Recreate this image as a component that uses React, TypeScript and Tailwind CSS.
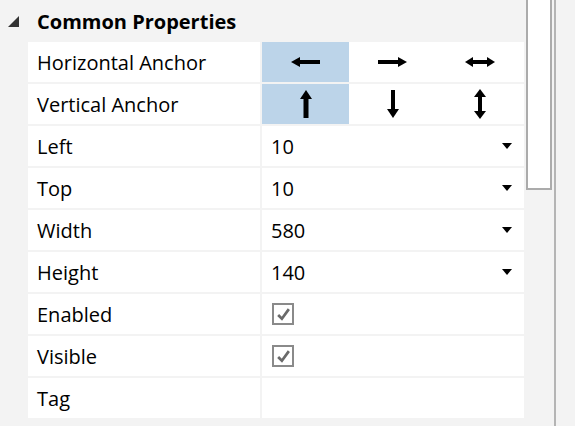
import React from 'react';

const font = { fontFamily: '"Open Sans", "Noto Sans", sans-serif' };

function ArrowLeft() {
    return (
        <svg width="29" height="10" viewBox="0 0 29 10">
            <polygon points="0,5 9,0 9,10" fill="#000" />
            <rect x="8" y="3" width="21" height="4" fill="#000" />
        </svg>
    );
}

function ArrowRight() {
    return (
        <svg width="29" height="10" viewBox="0 0 29 10">
            <polygon points="29,5 20,0 20,10" fill="#000" />
            <rect x="0" y="3" width="21" height="4" fill="#000" />
        </svg>
    );
}

function ArrowBoth() {
    return (
        <svg width="30" height="10" viewBox="0 0 30 10">
            <polygon points="0,5 8,0 8,10" fill="#000" />
            <polygon points="30,5 22,0 22,10" fill="#000" />
            <rect x="7" y="3" width="16" height="4" fill="#000" />
        </svg>
    );
}

function ArrowUp() {
    return (
        <svg width="12" height="28" viewBox="0 0 12 28">
            <polygon points="6,0 0,9 12,9" fill="#000" />
            <rect x="3.5" y="8" width="5" height="20" fill="#000" />
        </svg>
    );
}

function ArrowDown() {
    return (
        <svg width="12" height="28" viewBox="0 0 12 28">
            <polygon points="6,28 0,19 12,19" fill="#000" />
            <rect x="4" y="0" width="4" height="20" fill="#000" />
        </svg>
    );
}

function ArrowUpDown() {
    return (
        <svg width="12" height="30" viewBox="0 0 12 30">
            <polygon points="6,0 0,8 12,8" fill="#000" />
            <polygon points="6,30 0,22 12,22" fill="#000" />
            <rect x="4" y="7" width="4" height="16" fill="#000" />
        </svg>
    );
}

function Checkbox() {
    return (
        <div className="w-[22px] h-[22px] border-2 border-[#8a8a8a] bg-white flex items-center justify-center">
            <svg width="15" height="15" viewBox="0 0 14 14">
                <path d="M2 7.5 L5.5 11 L12 2" stroke="#6a6a6a" strokeWidth="2.5" fill="none" />
            </svg>
        </div>
    );
}

function Dropdown({ value }: { value: string }) {
    return (
        <div className="bg-white flex items-center justify-between pl-[9px] pr-[12px]">
            <span className="pt-[2px]">{value}</span>
            <svg width="10" height="6" viewBox="0 0 10 6">
                <polygon points="0,0 10,0 5,6" fill="#000" />
            </svg>
        </div>
    );
}

function Label({ text }: { text: string }) {
    return <div className="bg-white flex items-center pl-[9px] pt-[2px]">{text}</div>;
}

export default function App() {
    return (
        <div className="w-[575px] h-[426px] bg-[#f3f3f3] flex overflow-hidden text-black" style={font}>
            <div className="w-[524px] shrink-0 flex flex-col">
                <div className="h-[42px] flex items-center">
                    <svg width="11" height="11" viewBox="0 0 11 11" className="ml-[8px] mt-[1px]">
                        <polygon points="0,11 11,11 11,0" fill="#333" />
                    </svg>
                    <span className="ml-[18px] mt-[2px] text-[20px] font-bold">Common Properties</span>
                </div>
                <div className="ml-[28px] grid grid-cols-[232px_262px] auto-rows-[40px] gap-[2px] text-[20px]">
                    <Label text="Horizontal Anchor" />
                    <div className="grid grid-cols-3 bg-white">
                        <div className="bg-[#bcd4e9] flex items-center justify-center"><ArrowLeft /></div>
                        <div className="flex items-center justify-center"><ArrowRight /></div>
                        <div className="flex items-center justify-center"><ArrowBoth /></div>
                    </div>
                    <Label text="Vertical Anchor" />
                    <div className="grid grid-cols-3 bg-white">
                        <div className="bg-[#bcd4e9] flex items-center justify-center"><ArrowUp /></div>
                        <div className="flex items-center justify-center"><ArrowDown /></div>
                        <div className="flex items-center justify-center"><ArrowUpDown /></div>
                    </div>
                    <Label text="Left" />
                    <Dropdown value="10" />
                    <Label text="Top" />
                    <Dropdown value="10" />
                    <Label text="Width" />
                    <Dropdown value="580" />
                    <Label text="Height" />
                    <Dropdown value="140" />
                    <Label text="Enabled" />
                    <div className="bg-white flex items-center pl-[10px]"><Checkbox /></div>
                    <Label text="Visible" />
                    <div className="bg-white flex items-center pl-[10px]"><Checkbox /></div>
                    <Label text="Tag" />
                    <div className="bg-white" />
                </div>
            </div>
            <div className="ml-[2px] w-[26px] h-[190px] shrink-0 bg-white border-2 border-t-0 border-[#ababab]" />
            <div className="ml-[2px] w-[2px] h-full bg-[#b4b4b4]" />
        </div>
    );
}
